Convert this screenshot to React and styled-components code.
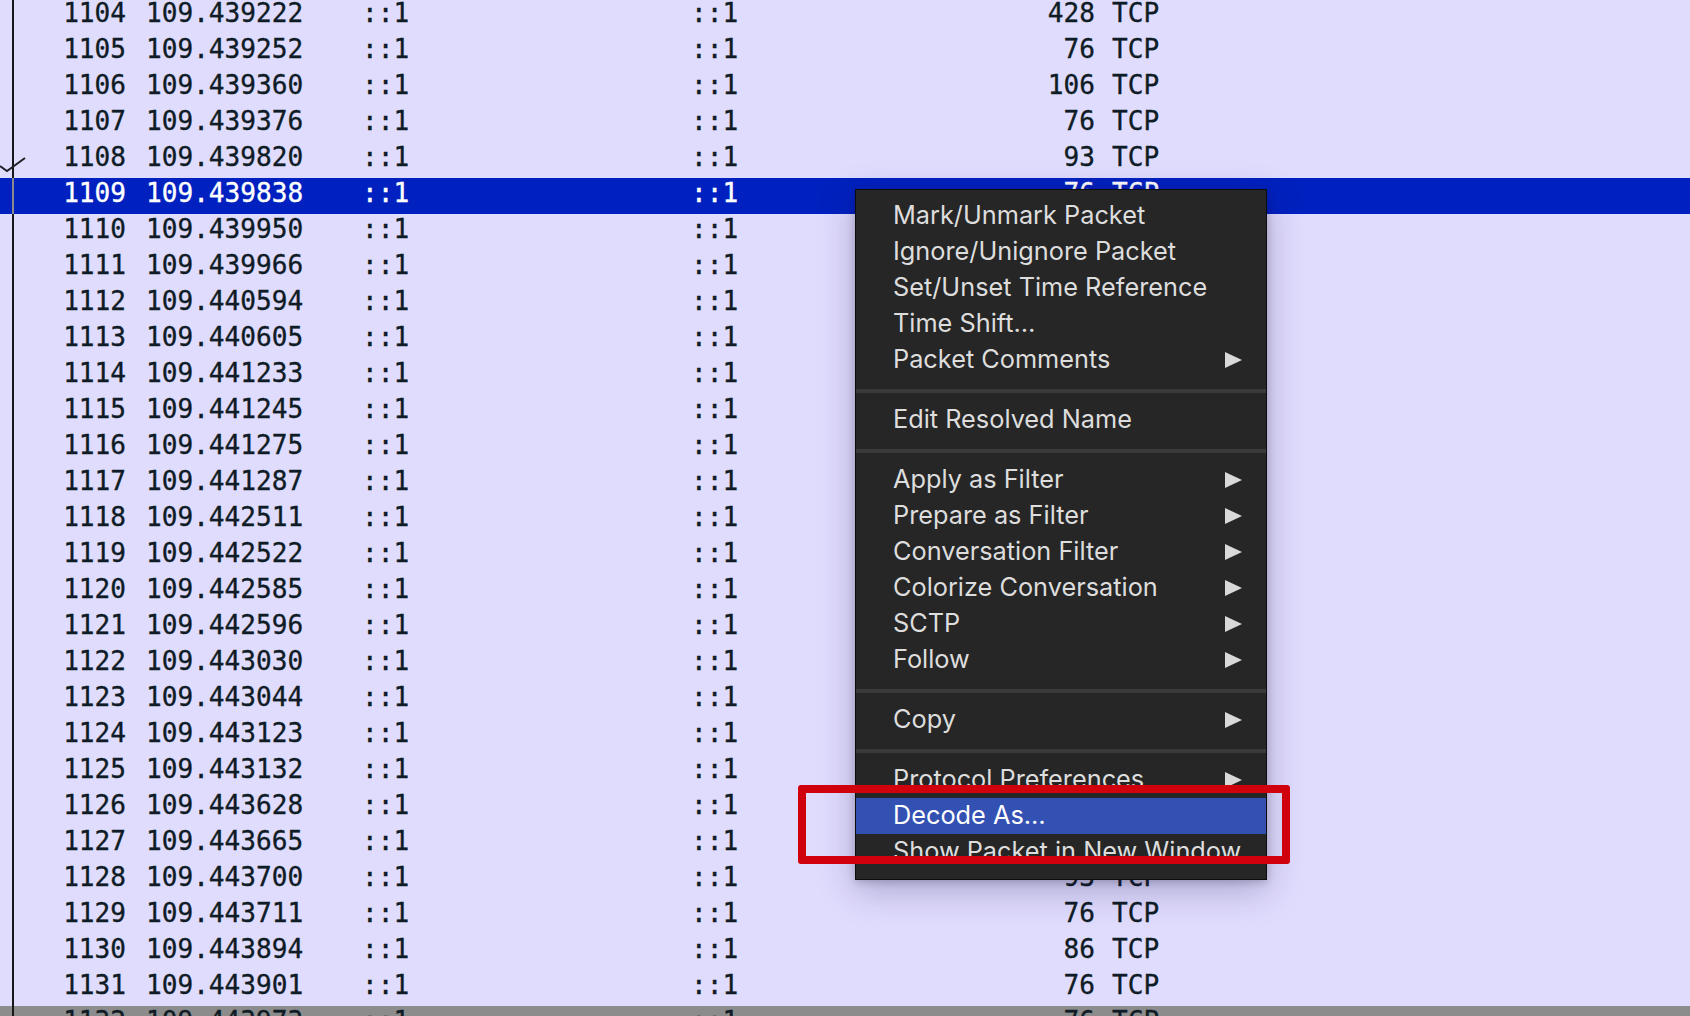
import React from "react";
import styled, { createGlobalStyle } from "styled-components";

const GlobalStyle = createGlobalStyle`
  html, body {
    margin: 0;
    padding: 0;
    width: 1690px;
    height: 1016px;
    overflow: hidden;
    background: #e0dcfe;
  }
`;

const Screen = styled.div`
  position: relative;
  width: 1690px;
  height: 1016px;
  overflow: hidden;
  background: #e0dcfe;
`;

const PacketList = styled.div`
  display: flex;
  flex-direction: column;
  margin-top: -2px;
`;

const Row = styled.div`
  display: flex;
  align-items: stretch;
  height: 36px;
  flex-shrink: 0;
  background: ${(p) => (p.$selected ? "#0021bf" : p.$dim ? "#8c8c8c" : "transparent")};
  color: ${(p) => (p.$selected ? "#ffffff" : "#0f1c26")};
  font-family: "DejaVu Sans Mono", "Liberation Mono", monospace;
  font-size: 26.1px;
  line-height: 31px;
  white-space: pre;
  -webkit-text-stroke: 0.35px currentColor;
`;

const Related = styled.div`
  position: relative;
  width: 12px;
  flex-shrink: 0;
  border-right: 2px solid ${(p) => (p.$selected ? "#8a8a8a" : "#16181c")};
`;

const Chevron = styled.svg`
  position: absolute;
  left: 0;
  top: 0;
  overflow: visible;
`;

const Cell = styled.div`
  flex-shrink: 0;
  width: ${(p) => p.$w}px;
  margin-left: ${(p) => p.$ml || 0}px;
  text-align: ${(p) => (p.$right ? "right" : "left")};
`;

const Menu = styled.div`
  position: absolute;
  left: 855px;
  top: 189px;
  width: 410px;
  padding: 8px 0 9px;
  background: #262626;
  border: 1px solid #0c0c0c;
  box-shadow: 0 10px 34px rgba(30, 20, 80, 0.28), 0 2px 8px rgba(0, 0, 0, 0.2);
  display: flex;
  flex-direction: column;
  font-family: "Inter", "Liberation Sans", sans-serif;
  font-size: 25.3px;
  color: #dddddd;
`;

const Item = styled.div`
  box-sizing: border-box;
  display: flex;
  align-items: center;
  justify-content: space-between;
  height: 36px;
  padding: 0 24px 3px 37px;
  line-height: 32px;
  white-space: nowrap;
  background: ${(p) => (p.$active ? "#3350b3" : "transparent")};
  color: ${(p) => (p.$active ? "#ffffff" : "#dddddd")};
`;

const Arrow = styled.span`
  width: 0;
  height: 0;
  margin-top: 3px;
  border-top: 8px solid transparent;
  border-bottom: 8px solid transparent;
  border-left: 17px solid #d9d9d9;
`;

const Separator = styled.div`
  height: 24px;
  display: flex;
  align-items: center;
  &::before {
    content: "";
    flex: 1;
    height: 4px;
    margin-top: 2px;
    background: #3a3a3a;
  }
`;

const Highlight = styled.div`
  position: absolute;
  left: 798px;
  top: 785px;
  width: 476px;
  height: 63px;
  border: 8px solid #d0000c;
  border-radius: 3px;
`;

const times = [
  "109.439222", "109.439252", "109.439360", "109.439376", "109.439820",
  "109.439838", "109.439950", "109.439966", "109.440594", "109.440605",
  "109.441233", "109.441245", "109.441275", "109.441287", "109.442511",
  "109.442522", "109.442585", "109.442596", "109.443030", "109.443044",
  "109.443123", "109.443132", "109.443628", "109.443665", "109.443700",
  "109.443711", "109.443894", "109.443901", "109.443973",
];

const lengths = [
  428, 76, 106, 76, 93, 76, 76, 76, 86, 76, 76, 76, 93, 76, 76,
  76, 86, 76, 76, 76, 76, 76, 93, 76, 93, 76, 86, 76, 76,
];

const packets = times.map((t, i) => ({
  no: 1104 + i,
  time: t,
  len: lengths[i],
}));

const menuItems = [
  { label: "Mark/Unmark Packet" },
  { label: "Ignore/Unignore Packet" },
  { label: "Set/Unset Time Reference" },
  { label: "Time Shift…" },
  { label: "Packet Comments", sub: true },
  { sep: true },
  { label: "Edit Resolved Name" },
  { sep: true },
  { label: "Apply as Filter", sub: true },
  { label: "Prepare as Filter", sub: true },
  { label: "Conversation Filter", sub: true },
  { label: "Colorize Conversation", sub: true },
  { label: "SCTP", sub: true },
  { label: "Follow", sub: true },
  { sep: true },
  { label: "Copy", sub: true },
  { sep: true },
  { label: "Protocol Preferences", sub: true },
  { label: "Decode As…", active: true },
  { label: "Show Packet in New Window" },
];

export default function App() {
  return (
    <Screen>
      <GlobalStyle />
      <PacketList>
        {packets.map((p) => {
          const selected = p.no === 1109;
          return (
            <Row key={p.no} $selected={selected} $dim={p.no === 1132}>
              <Related $selected={selected}>
                {p.no === 1108 && (
                  <Chevron width="26" height="36">
                    <polyline
                      points="0,164 7,169 25,156"
                      transform="translate(0,-140)"
                      fill="none"
                      stroke="#1e2024"
                      strokeWidth="2"
                    />
                  </Chevron>
                )}
              </Related>
              <Cell $w={112} $right>{p.no}</Cell>
              <Cell $w={216} $ml={20}>{p.time}</Cell>
              <Cell $w={329}>::1</Cell>
              <Cell $w={250}>::1</Cell>
              <Cell $w={154} $right>{p.len}</Cell>
              <Cell $w={120} $ml={17}>TCP</Cell>
            </Row>
          );
        })}
      </PacketList>

      <Menu>
        {menuItems.map((m, i) =>
          m.sep ? (
            <Separator key={i} />
          ) : (
            <Item key={i} $active={m.active}>
              <span>{m.label}</span>
              {m.sub && <Arrow />}
            </Item>
          )
        )}
      </Menu>

      <Highlight />
    </Screen>
  );
}
